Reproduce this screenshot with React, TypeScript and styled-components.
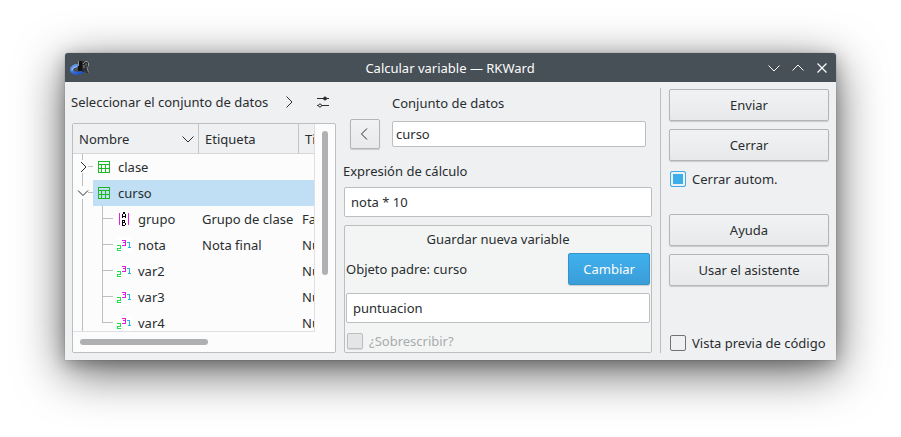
import React, { useState } from "react";
import styled, { createGlobalStyle, css } from "styled-components";

const GlobalStyle = createGlobalStyle`
  *, *::before, *::after { box-sizing: border-box; }
  body {
    margin: 0;
    background: #fff;
    color: #292d30;
    font: 13px/18px "Noto Sans", "Open Sans", sans-serif;
  }
  button, input { font: inherit; color: inherit; }
`;

const Desktop = styled.main`
  padding: 53px 65px 77px;
  overflow: hidden;
`;

const Dialog = styled.section`
  background: #eff0f2;
  border-radius: 3px 3px 0 0;
  box-shadow: 0 0 1px rgba(0, 0, 0, 0.5), 0 12px 48px rgba(0, 0, 0, 0.62), 0 4px 16px rgba(0, 0, 0, 0.25);
`;

const TitleBar = styled.header`
  display: grid;
  grid-template-columns: 64px 1fr 64px;
  align-items: center;
  height: 29px;
  padding: 0 6px 0 5px;
  border-radius: 3px 3px 0 0;
  background: #475057;
  color: #fcfcfc;
`;

const Title = styled.h1`
  margin: 0;
  font: inherit;
  text-align: center;
`;

const WindowButtons = styled.div`
  display: flex;
  gap: 8px;
`;

const IconButton = styled.button`
  display: flex;
  align-items: center;
  justify-content: center;
  width: 16px;
  height: 16px;
  padding: 0;
  border: 0;
  background: none;
`;

const Body = styled.div`
  display: grid;
  grid-template-columns: 272px minmax(0, 1fr) 176px;
  padding: 6px 0 7px;
`;

const Column = styled.div`
  display: flex;
  flex-direction: column;
`;

const SourceColumn = styled(Column)`
  padding: 0 1px 0 6px;
`;

const SourceHeader = styled.div`
  display: flex;
  align-items: center;
  height: 28px;
  margin-bottom: 7px;
`;

const SourceTitle = styled.h2`
  flex: 1;
  margin: 0;
  font: inherit;
`;

const SourceTools = styled.div`
  display: flex;
  gap: 18px;
  padding-right: 5px;
`;

const TreeFrame = styled.div`
  display: grid;
  grid-template: 208px 20px / minmax(0, 1fr) 20px;
  margin-left: 1px;
  border: 1px solid #bcbec0;
  border-radius: 2px;
  background: #fcfcfc;
`;

const TreeViewport = styled.div`
  overflow: hidden;
  border: solid #dfe0e1;
  border-width: 0 1px 1px 0;
`;

const TreeTable = styled.table`
  table-layout: fixed;
  width: 100%;
  border-collapse: separate;
  border-spacing: 0;
`;

const HeaderCell = styled.th<{ $width?: number }>`
  width: ${(p) => (p.$width ? `${p.$width}px` : "auto")};
  height: 30px;
  padding: 0 2px 0 6px;
  border: solid #c3c5c7;
  border-width: 0 1px 1px 0;
  border-bottom-color: #d5d7d8;
  background: #eff0f2;
  font-weight: normal;
  text-align: left;
  overflow: hidden;
  &:last-child {
    border-right: 0;
    padding-right: 0;
  }
`;

const HeaderContent = styled.div`
  display: flex;
  align-items: center;
  justify-content: space-between;
`;

const selectable = css<{ $selected?: boolean }>`
  background: ${(p) => (p.$selected ? "#c1dff4" : "transparent")};
`;

const Cell = styled.td<{ $selected?: boolean }>`
  height: 26px;
  padding: 0 0 0 3px;
  white-space: nowrap;
  overflow: hidden;
  ${selectable}
`;

const NameCell = styled.td`
  height: 26px;
  padding: 0;
`;

const NameContent = styled.div`
  display: flex;
  height: 26px;
`;

const Item = styled.span<{ $selected?: boolean }>`
  display: flex;
  flex: 1;
  align-items: center;
  gap: 6px;
  padding-left: 3px;
  ${selectable}
`;

const ScrollTrack = styled.div<{ $vertical?: boolean }>`
  padding: 7px;
`;

const ScrollHandle = styled.div<{ $vertical?: boolean }>`
  width: ${(p) => (p.$vertical ? "6px" : "128px")};
  height: ${(p) => (p.$vertical ? "144px" : "6px")};
  border-radius: 3px;
  background: #aeb0b2;
`;

const FormColumn = styled(Column)`
  padding: 0 8px 0 6px;
`;

const DataSetRow = styled.div`
  display: grid;
  grid-template-columns: 30px minmax(0, 1fr);
  column-gap: 12px;
  row-gap: 7px;
  align-items: center;
  padding: 6px 6px 0 7px;
`;

const FieldLabel = styled.label`
  grid-column: 2;
`;

const Input = styled.input<{ $compact?: boolean }>`
  display: block;
  width: 100%;
  height: ${(p) => (p.$compact ? "26px" : "30px")};
  padding: 0 ${(p) => (p.$compact ? "3px" : "6px")};
  border: 1px solid #bcbec0;
  border-radius: 2px;
  outline: 0;
  background: #fff;
`;

const Button = styled.button<{ $primary?: boolean }>`
  display: flex;
  align-items: center;
  justify-content: center;
  height: 32px;
  padding: 0 14px;
  border: 1px solid ${(p) => (p.$primary ? "#3593c9" : "#b3b5b7")};
  border-radius: 2px;
  background: ${(p) =>
    p.$primary
      ? "linear-gradient(#3fb1ef, #3a9dd7)"
      : "linear-gradient(#f1f2f3, #e8e9ea)"};
  box-shadow: 0 1px 1px rgba(0, 0, 0, 0.16);
  color: ${(p) => (p.$primary ? "#fcfcfc" : "#292d30")};
`;

const BackButton = styled(Button)`
  height: 30px;
  padding: 0;
`;

const Expression = styled.div`
  display: flex;
  flex-direction: column;
  gap: 7px;
  padding: 13px 0 8px;
`;

const ExpressionField = styled.div`
  padding-left: 1px;
`;

const SaveGroup = styled.fieldset`
  display: flex;
  flex: 1;
  flex-direction: column;
  min-width: 0;
  margin: 0 0 0 1px;
  padding: 4px 1px 1px;
  border: 1px solid #bcbec0;
  border-radius: 2px;
  background: #f3f5f4;
`;

const SaveTitle = styled.label`
  margin-bottom: 5px;
  text-align: center;
`;

const ParentRow = styled.div`
  display: flex;
  align-items: center;
  justify-content: space-between;
  margin-bottom: 8px;
`;

const CheckLabel = styled.label<{ $disabled?: boolean }>`
  display: flex;
  align-items: center;
  gap: 6px;
  height: 20px;
  padding-left: 1px;
  color: ${(p) => (p.$disabled ? "#a9abac" : "inherit")};
`;

const CheckBox = styled.input.attrs({ type: "checkbox" })`
  appearance: none;
  flex: none;
  width: 16px;
  height: 16px;
  margin: 0;
  border: 1px solid #6f7376;
  border-radius: 2px;
  background: transparent;
  &:checked {
    border-color: #3daee9;
    background: #3daee9;
    box-shadow: inset 0 0 0 2px #eff0f2;
  }
  &:disabled {
    border-color: #bcbec0;
    background: #e3e5e6;
    box-shadow: 0 1px 1px rgba(0, 0, 0, 0.12);
  }
`;

const SaveFooter = styled.div`
  margin-top: auto;
`;

const ActionColumn = styled(Column)`
  gap: 8px;
  padding: 1px 7px 0 8px;
  border-left: 1px solid #bcbec0;
`;

const Spacer = styled.div<{ $size?: number }>`
  flex: ${(p) => (p.$size ? `0 0 ${p.$size}px` : "1")};
`;

type Direction = "up" | "down" | "left" | "right";
const chevrons: Record<Direction, string> = {
  up: "M2.5 10.5 8 5l5.5 5.5",
  down: "M2.5 5.5 8 11l5.5-5.5",
  left: "M10 2.5 4.5 8l5.5 5.5",
  right: "M5.5 2.5 11 8l-5.5 5.5",
};

function Chevron({ to, size = 16 }: { to: Direction; size?: number }) {
  return (
    <svg width={size} height={size} viewBox="0 0 16 16" fill="none" stroke="currentColor" strokeWidth="1" aria-hidden>
      <path d={chevrons[to]} />
    </svg>
  );
}

function AppIcon() {
  return (
    <svg width="22" height="18" viewBox="0 0 22 18" aria-hidden>
      <defs>
        <linearGradient id="ring" x1="0" y1="0" x2="1" y2="1">
          <stop offset="0" stopColor="#6ea4ee" />
          <stop offset="0.5" stopColor="#2f6fe0" />
          <stop offset="1" stopColor="#1b49b8" />
        </linearGradient>
      </defs>
      <ellipse cx="7.5" cy="10.5" rx="6" ry="4" fill="none" stroke="url(#ring)" strokeWidth="3" />
      <path d="M2 11.5c0-2 2-3.500 5-3.800" fill="none" stroke="#b5d3fa" />
      <path d="M8 2h4v10H8z" fill="#111315" />
      <path d="M12 2h5.500l1.500 1.500V7l-1.500 1.500L19 14h-3l-1.500-4.500V13H12z" fill="#2b2d2f" />
      <path d="M8.500 2v5M13 5l2-2.500h2.500l1 1.500v3L17 8.500l1.500 5M14 6v3" fill="none" stroke="#929597" />
      <path d="M15.500 4.500h1.500v2h-1.500z" fill="#6b6e70" />
    </svg>
  );
}

function SettingsIcon() {
  return (
    <svg width="16" height="16" viewBox="0 0 16 16" fill="none" stroke="#292d30" aria-hidden>
      <path d="M2 4.500h12M6.500 11.500H14M2 11.500h1" />
      <circle cx="10" cy="4.500" r="1.500" fill="#292d30" />
      <circle cx="5" cy="11.500" r="1.500" />
    </svg>
  );
}

type Kind = "frame" | "factor" | "numeric";

function KindIcon({ kind }: { kind: Kind }) {
  return (
    <svg width="16" height="16" viewBox="0 0 16 16" fill="none" shapeRendering="crispEdges" aria-hidden>
      {kind === "frame" && (
        <path d="M2.500 2.500h11v11h-11zM2.500 5.500h11M2.500 9.500h11M5.500 5.500v8M9.500 5.500v8" stroke="#1fb825" />
      )}
      {kind === "factor" && (
        <>
          <path d="M0 0h16v16H0z" fill="#fff" />
          <path d="M3.500 2v12M12.500 2v12" stroke="#e01fe0" />
          <path d="M6.500 7V3M9.500 7V3M7.500 3V1M8.500 3V1M6.500 5.500h3" stroke="#000" />
          <path d="M6.500 9v6M6 9.500h3M8.500 9v3M6 11.500h3M9.500 12v2M6 14.500h3" stroke="#000" />
        </>
      )}
      {kind === "numeric" && (
        <>
          <path d="M0 0h16v16H0z" fill="#fff" />
          <path d="M1 8.500h3.500v2.500h-3v2.500H5" stroke="#1fe04a" />
          <path d="M6 3.500h3.500v5H6M7 5.500h2.500" stroke="#e01fe0" />
          <path d="M11 5.500h2.500v5M12 10.500h3" stroke="#1fb8e8" />
        </>
      )}
    </svg>
  );
}

interface Row {
  name: string;
  label?: string;
  type?: string;
  kind: Kind;
  open?: boolean;
  last?: boolean;
  selected?: boolean;
}

const rows: Row[] = [
  { name: "clase", kind: "frame", open: false },
  { name: "curso", kind: "frame", open: true, selected: true },
  { name: "grupo", label: "Grupo de clase", type: "Factor", kind: "factor" },
  { name: "nota", label: "Nota final", type: "Numérico", kind: "numeric" },
  { name: "var2", type: "Numérico", kind: "numeric" },
  { name: "var3", type: "Numérico", kind: "numeric" },
  { name: "var4", type: "Numérico", kind: "numeric", last: true },
];

function Branch({ row }: { row: Row }) {
  if (row.kind === "frame") {
    return (
      <svg width="20" height="26" fill="none" aria-hidden>
        <path d="M9.500 0v6M9.500 19v7M15 12.500h5" stroke="#bcbec0" />
        <path d={row.open ? "M5 10.500l5 5 5-5" : "M8 8l5 5-5 5"} stroke="#292d30" />
      </svg>
    );
  }
  return (
    <svg width="40" height="26" fill="none" aria-hidden>
      <path d={`M9.500 0v26M29.500 0v${row.last ? 13 : 26}M29.500 12.500H40`} stroke="#bcbec0" />
    </svg>
  );
}

function ObjectTree() {
  return (
    <TreeFrame>
      <TreeViewport>
        <TreeTable>
          <thead>
            <tr>
              <HeaderCell $width={126}>
                <HeaderContent>
                  Nombre
                  <Chevron to="down" />
                </HeaderContent>
              </HeaderCell>
              <HeaderCell $width={100}>Etiqueta</HeaderCell>
              <HeaderCell>Tipo</HeaderCell>
            </tr>
          </thead>
          <tbody>
            {rows.map((row) => (
              <tr key={row.name}>
                <NameCell>
                  <NameContent>
                    <Branch row={row} />
                    <Item $selected={row.selected}>
                      <KindIcon kind={row.kind} />
                      {row.name}
                    </Item>
                  </NameContent>
                </NameCell>
                <Cell $selected={row.selected}>{row.label}</Cell>
                <Cell $selected={row.selected}>{row.type}</Cell>
              </tr>
            ))}
          </tbody>
        </TreeTable>
      </TreeViewport>
      <ScrollTrack>
        <ScrollHandle $vertical />
      </ScrollTrack>
      <ScrollTrack>
        <ScrollHandle />
      </ScrollTrack>
    </TreeFrame>
  );
}

export default function App() {
  const [dataSet, setDataSet] = useState("curso");
  const [expression, setExpression] = useState("nota * 10");
  const [target, setTarget] = useState("puntuacion");
  const [autoClose, setAutoClose] = useState(true);
  const [preview, setPreview] = useState(false);

  return (
    <>
      <GlobalStyle />
      <Desktop>
        <Dialog>
          <TitleBar>
            <AppIcon />
            <Title>Calcular variable — RKWard</Title>
            <WindowButtons>
              <IconButton aria-label="Minimizar"><Chevron to="down" /></IconButton>
              <IconButton aria-label="Maximizar"><Chevron to="up" /></IconButton>
              <IconButton aria-label="Cerrar ventana">
                <svg width="16" height="16" fill="none" stroke="currentColor" strokeWidth="1.200" aria-hidden>
                  <path d="M3.500 3.500l9 9M12.500 3.500l-9 9" />
                </svg>
              </IconButton>
            </WindowButtons>
          </TitleBar>
          <Body>
            <SourceColumn>
              <SourceHeader>
                <SourceTitle>Seleccionar el conjunto de datos</SourceTitle>
                <SourceTools>
                  <IconButton aria-label="Expandir"><Chevron to="right" /></IconButton>
                  <IconButton aria-label="Configurar"><SettingsIcon /></IconButton>
                </SourceTools>
              </SourceHeader>
              <ObjectTree />
            </SourceColumn>
            <FormColumn>
              <DataSetRow>
                <FieldLabel htmlFor="dataset">Conjunto de datos</FieldLabel>
                <BackButton aria-label="Quitar"><Chevron to="left" /></BackButton>
                <Input id="dataset" $compact value={dataSet} onChange={(e) => setDataSet(e.target.value)} />
              </DataSetRow>
              <Expression>
                <label htmlFor="expression">Expresión de cálculo</label>
                <ExpressionField>
                  <Input id="expression" value={expression} onChange={(e) => setExpression(e.target.value)} />
                </ExpressionField>
              </Expression>
              <SaveGroup>
                <SaveTitle htmlFor="target">Guardar nueva variable</SaveTitle>
                <ParentRow>
                  <span>Objeto padre: curso</span>
                  <Button $primary>Cambiar</Button>
                </ParentRow>
                <Input id="target" value={target} onChange={(e) => setTarget(e.target.value)} />
                <SaveFooter>
                  <CheckLabel $disabled>
                    <CheckBox disabled />
                    ¿Sobrescribir?
                  </CheckLabel>
                </SaveFooter>
              </SaveGroup>
            </FormColumn>
            <ActionColumn>
              <Button>Enviar</Button>
              <Button>Cerrar</Button>
              <CheckLabel>
                <CheckBox checked={autoClose} onChange={(e) => setAutoClose(e.target.checked)} />
                Cerrar autom.
              </CheckLabel>
              <Spacer $size={9} />
              <Button>Ayuda</Button>
              <Button>Usar el asistente</Button>
              <Spacer />
              <CheckLabel>
                <CheckBox checked={preview} onChange={(e) => setPreview(e.target.checked)} />
                Vista previa de código
              </CheckLabel>
            </ActionColumn>
          </Body>
        </Dialog>
      </Desktop>
    </>
  );
}
